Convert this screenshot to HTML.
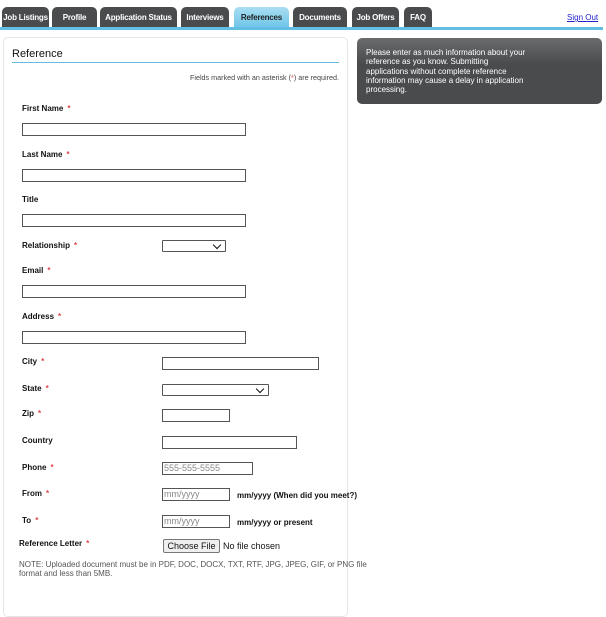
<!DOCTYPE html>
<html><head><style>
*{margin:0;padding:0;box-sizing:border-box}
body{width:606px;height:599px;background:#fff;font-family:"Liberation Sans",Arial,sans-serif;position:relative;overflow:hidden}
.a{position:absolute}
.tab{position:absolute;top:7px;height:21px;background:#4a4b4d;color:#fff;font-size:8px;font-weight:bold;border-radius:5px 5px 0 0;text-align:center;line-height:21px;letter-spacing:-0.2px}
.tab.on{background:linear-gradient(#a9def2,#6cc5e8);color:#222}
.lbl{position:absolute;font-size:8px;font-weight:bold;color:#111}
.lbl i{color:#e0474c;font-style:normal;margin-left:4px}
.in{position:absolute;border:1px solid #555;height:13px;background:#fff;font-size:9px;color:#888;padding-left:1px;line-height:11px}
.sel{position:absolute;border:1px solid #555;height:12px;background:#fff;border-radius:1px}
.sel:after{content:"";position:absolute;right:5px;top:1px;width:5px;height:5px;border-right:1.8px solid #111;border-bottom:1.8px solid #111;transform:rotate(45deg)}
.t{position:absolute;font-size:8px;font-weight:bold;color:#111}
</style></head><body>
<div class="tab" style="left:2px;width:47px">Job Listings</div>
<div class="tab" style="left:52px;width:45px">Profile</div>
<div class="tab" style="left:100px;width:77px">Application Status</div>
<div class="tab" style="left:181px;width:48px">Interviews</div>
<div class="tab on" style="left:234px;width:55px">References</div>
<div class="tab" style="left:293px;width:54px">Documents</div>
<div class="tab" style="left:352px;width:47px">Job Offers</div>
<div class="tab" style="left:404px;width:28px">FAQ</div>
<div class="a" style="left:567px;top:13px;font-size:8px;color:#2222cc;text-decoration:underline">Sign Out</div>
<div class="a" style="left:0;top:27px;width:603px;height:3px;background:#62bfe3"></div>
<div class="a" style="left:3px;top:37px;width:345px;height:580px;border:1px solid #e6e6e6;border-radius:5px"></div>
<div class="a" style="left:12px;top:48px;font-size:11px;color:#111">Reference</div>
<div class="a" style="left:12px;top:62px;width:327px;height:1px;background:#62bfe3"></div>
<div class="a" style="left:0;top:73px;width:339px;text-align:right;font-size:7.2px;color:#444;white-space:nowrap">Fields marked with an asterisk (<span style="color:#e0474c">*</span>) are required.</div>
<div class="a" style="left:357px;top:38px;width:245px;height:66px;background:linear-gradient(#6a6b6d,#4a4b4d 40%,#4a4b4d);border-radius:5px"></div>
<div class="a" style="left:366px;top:48px;width:160px;color:#fff;font-size:8px;line-height:9.3px">Please enter as much information about your reference as you know. Submitting applications without complete reference information may cause a delay in application processing.</div>

<div class="lbl" style="left:22px;top:104px">First Name<i>*</i></div>
<div class="in" style="left:22px;top:123px;width:224px"></div>
<div class="lbl" style="left:22px;top:150px">Last Name<i>*</i></div>
<div class="in" style="left:22px;top:169px;width:224px"></div>
<div class="lbl" style="left:22px;top:195px">Title</div>
<div class="in" style="left:22px;top:214px;width:224px"></div>
<div class="lbl" style="left:22px;top:241px">Relationship<i>*</i></div>
<div class="sel" style="left:162px;top:240px;width:64px"></div>
<div class="lbl" style="left:22px;top:266px">Email<i>*</i></div>
<div class="in" style="left:22px;top:285px;width:224px"></div>
<div class="lbl" style="left:22px;top:312px">Address<i>*</i></div>
<div class="in" style="left:22px;top:331px;width:224px"></div>
<div class="lbl" style="left:22px;top:357px">City<i>*</i></div>
<div class="in" style="left:162px;top:357px;width:157px"></div>
<div class="lbl" style="left:22px;top:384px">State<i>*</i></div>
<div class="sel" style="left:162px;top:384px;width:107px"></div>
<div class="lbl" style="left:22px;top:409px">Zip<i>*</i></div>
<div class="in" style="left:162px;top:409px;width:68px"></div>
<div class="lbl" style="left:22px;top:436px">Country</div>
<div class="in" style="left:162px;top:436px;width:135px"></div>
<div class="lbl" style="left:22px;top:463px">Phone<i>*</i></div>
<div class="in" style="left:162px;top:462px;width:91px">555-555-5555</div>
<div class="lbl" style="left:22px;top:489px">From<i>*</i></div>
<div class="in" style="left:162px;top:488px;width:68px">mm/yyyy</div>
<div class="t" style="left:237px;top:491px">mm/yyyy (When did you meet?)</div>
<div class="lbl" style="left:22px;top:516px">To<i>*</i></div>
<div class="in" style="left:162px;top:515px;width:68px">mm/yyyy</div>
<div class="t" style="left:237px;top:518px">mm/yyyy or present</div>
<div class="lbl" style="left:19px;top:539px">Reference Letter<i>*</i></div>
<div class="a" style="left:163px;top:539px;width:57px;height:14px;border:1px solid #777;background:#efefef;border-radius:2px;font-size:9px;line-height:12px;text-align:center;color:#111">Choose File</div>
<div class="a" style="left:223px;top:541px;font-size:9px;color:#111">No file chosen</div>
<div class="a" style="left:19px;top:560px;width:355px;font-size:8px;color:#555;line-height:9px">NOTE: Uploaded document must be in PDF, DOC, DOCX, TXT, RTF, JPG, JPEG, GIF, or PNG file format and less than 5MB.</div>
</body></html>
